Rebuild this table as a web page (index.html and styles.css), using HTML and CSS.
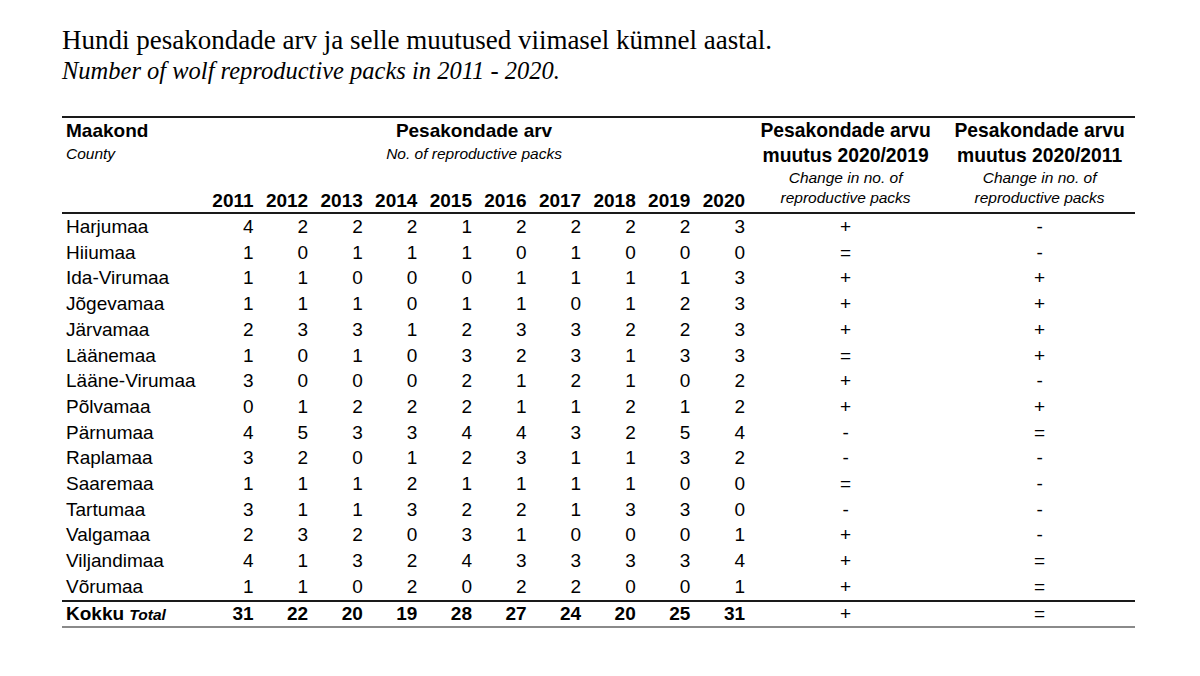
FILE: index.html
```html
<!DOCTYPE html>
<html lang="et">
<head>
<meta charset="utf-8">
<title>Hundi pesakondade arv</title>
<link rel="stylesheet" href="styles.css">
</head>
<body>
<main class="page">
  <header class="caption">
    <h1 class="title">Hundi pesakondade arv ja selle muutused viimasel kümnel aastal.</h1>
    <p class="subtitle">Number of wolf reproductive packs in 2011 - 2020.</p>
  </header>
  <table class="packs">
    <colgroup>
      <col class="c-name">
      <col class="c-year"><col class="c-year"><col class="c-year"><col class="c-year"><col class="c-year">
      <col class="c-year"><col class="c-year"><col class="c-year"><col class="c-year"><col class="c-year">
      <col class="c-chg1">
      <col class="c-chg2">
    </colgroup>
    <thead>
      <tr class="h1">
        <th class="name-h"><div class="b">Maakond</div><div class="i">County</div></th>
        <th class="group-h" colspan="10"><div class="b">Pesakondade arv</div><div class="i">No. of reproductive packs</div></th>
        <th class="chg-h" rowspan="2"><div class="b">Pesakondade arvu</div><div class="b">muutus 2020/2019</div><div class="i2">Change in no. of</div><div class="i2">reproductive packs</div></th>
        <th class="chg-h" rowspan="2"><div class="b">Pesakondade arvu</div><div class="b">muutus 2020/2011</div><div class="i2">Change in no. of</div><div class="i2">reproductive packs</div></th>
      </tr>
      <tr class="h2">
        <th></th>
        <th class="yr">2011</th><th class="yr">2012</th><th class="yr">2013</th><th class="yr">2014</th><th class="yr">2015</th>
        <th class="yr">2016</th><th class="yr">2017</th><th class="yr">2018</th><th class="yr">2019</th><th class="yr">2020</th>
      </tr>
    </thead>
    <tbody>
      <tr><td class="nm">Harjumaa</td><td>4</td><td>2</td><td>2</td><td>2</td><td>1</td><td>2</td><td>2</td><td>2</td><td>2</td><td>3</td><td class="cg">+</td><td class="cg">-</td></tr>
      <tr><td class="nm">Hiiumaa</td><td>1</td><td>0</td><td>1</td><td>1</td><td>1</td><td>0</td><td>1</td><td>0</td><td>0</td><td>0</td><td class="cg">=</td><td class="cg">-</td></tr>
      <tr><td class="nm">Ida-Virumaa</td><td>1</td><td>1</td><td>0</td><td>0</td><td>0</td><td>1</td><td>1</td><td>1</td><td>1</td><td>3</td><td class="cg">+</td><td class="cg">+</td></tr>
      <tr><td class="nm">Jõgevamaa</td><td>1</td><td>1</td><td>1</td><td>0</td><td>1</td><td>1</td><td>0</td><td>1</td><td>2</td><td>3</td><td class="cg">+</td><td class="cg">+</td></tr>
      <tr><td class="nm">Järvamaa</td><td>2</td><td>3</td><td>3</td><td>1</td><td>2</td><td>3</td><td>3</td><td>2</td><td>2</td><td>3</td><td class="cg">+</td><td class="cg">+</td></tr>
      <tr><td class="nm">Läänemaa</td><td>1</td><td>0</td><td>1</td><td>0</td><td>3</td><td>2</td><td>3</td><td>1</td><td>3</td><td>3</td><td class="cg">=</td><td class="cg">+</td></tr>
      <tr><td class="nm">Lääne-Virumaa</td><td>3</td><td>0</td><td>0</td><td>0</td><td>2</td><td>1</td><td>2</td><td>1</td><td>0</td><td>2</td><td class="cg">+</td><td class="cg">-</td></tr>
      <tr><td class="nm">Põlvamaa</td><td>0</td><td>1</td><td>2</td><td>2</td><td>2</td><td>1</td><td>1</td><td>2</td><td>1</td><td>2</td><td class="cg">+</td><td class="cg">+</td></tr>
      <tr><td class="nm">Pärnumaa</td><td>4</td><td>5</td><td>3</td><td>3</td><td>4</td><td>4</td><td>3</td><td>2</td><td>5</td><td>4</td><td class="cg">-</td><td class="cg">=</td></tr>
      <tr><td class="nm">Raplamaa</td><td>3</td><td>2</td><td>0</td><td>1</td><td>2</td><td>3</td><td>1</td><td>1</td><td>3</td><td>2</td><td class="cg">-</td><td class="cg">-</td></tr>
      <tr><td class="nm">Saaremaa</td><td>1</td><td>1</td><td>1</td><td>2</td><td>1</td><td>1</td><td>1</td><td>1</td><td>0</td><td>0</td><td class="cg">=</td><td class="cg">-</td></tr>
      <tr><td class="nm">Tartumaa</td><td>3</td><td>1</td><td>1</td><td>3</td><td>2</td><td>2</td><td>1</td><td>3</td><td>3</td><td>0</td><td class="cg">-</td><td class="cg">-</td></tr>
      <tr><td class="nm">Valgamaa</td><td>2</td><td>3</td><td>2</td><td>0</td><td>3</td><td>1</td><td>0</td><td>0</td><td>0</td><td>1</td><td class="cg">+</td><td class="cg">-</td></tr>
      <tr><td class="nm">Viljandimaa</td><td>4</td><td>1</td><td>3</td><td>2</td><td>4</td><td>3</td><td>3</td><td>3</td><td>3</td><td>4</td><td class="cg">+</td><td class="cg">=</td></tr>
      <tr><td class="nm">Võrumaa</td><td>1</td><td>1</td><td>0</td><td>2</td><td>0</td><td>2</td><td>2</td><td>0</td><td>0</td><td>1</td><td class="cg">+</td><td class="cg">=</td></tr>
    </tbody>
    <tfoot>
      <tr class="total"><td class="nm">Kokku <span class="tot-en">Total</span></td><td>31</td><td>22</td><td>20</td><td>19</td><td>28</td><td>27</td><td>24</td><td>20</td><td>25</td><td>31</td><td class="cg">+</td><td class="cg">=</td></tr>
    </tfoot>
  </table>
</main>
</body>
</html>
```

FILE: styles.css
```css
html, body {
  margin: 0;
  padding: 0;
  background: #ffffff;
  color: #000000;
}

.page {
  padding: 25px 0 0 62px;
}

.caption {
  font-family: "Liberation Serif", "Times New Roman", serif;
}

.title {
  margin: 0;
  font-size: 27px;
  font-weight: normal;
  line-height: 31px;
}

.subtitle {
  margin: 0;
  font-size: 24.5px;
  font-style: italic;
  line-height: 30px;
}

.packs {
  margin-top: 30px;
  width: 1073px;
  table-layout: fixed;
  border-collapse: collapse;
  font-family: "Liberation Sans", Arial, sans-serif;
  font-size: 19px;
  border-top: 2px solid #1a1a1a;
  border-bottom: 2px solid #8a8a8a;
}

.c-name { width: 139px; }
.c-year { width: 54.6px; }
.c-chg1 { width: 197px; }
.c-chg2 { width: 191px; }

.packs th,
.packs td {
  padding: 0;
}

.packs thead {
  border-bottom: 2px solid #1a1a1a;
}

.packs th {
  font-weight: normal;
  vertical-align: top;
}

.b {
  font-weight: bold;
  line-height: 25px;
}

.chg-h .b {
  font-size: 19.3px;
}

.i {
  font-style: italic;
  font-size: 15.5px;
  line-height: 22px;
}

.i2 {
  font-style: italic;
  font-size: 15.5px;
  line-height: 20px;
}

.name-h {
  text-align: left;
  padding-left: 4px !important;
}

.group-h {
  text-align: center;
}

.chg-h {
  text-align: center;
  padding-bottom: 4px !important;
}

.h2 th {
  height: 47px;
  vertical-align: bottom;
}

.yr {
  font-weight: bold !important;
  text-align: right;
  line-height: 22px;
  padding-right: 2px !important;
}

.packs td {
  text-align: right;
  padding-right: 2px;
  line-height: 25.7px;
}

.packs td.nm {
  text-align: left;
  padding-left: 4px;
  padding-right: 0;
}

.packs td.cg {
  text-align: center;
  padding-right: 0;
}

.total {
  border-top: 2px solid #1a1a1a;
  font-weight: bold;
}

.total td {
  line-height: 23px;
}

.total td.cg {
  font-weight: normal;
}

.tot-en {
  font-style: italic;
  font-size: 15.5px;
}
```
